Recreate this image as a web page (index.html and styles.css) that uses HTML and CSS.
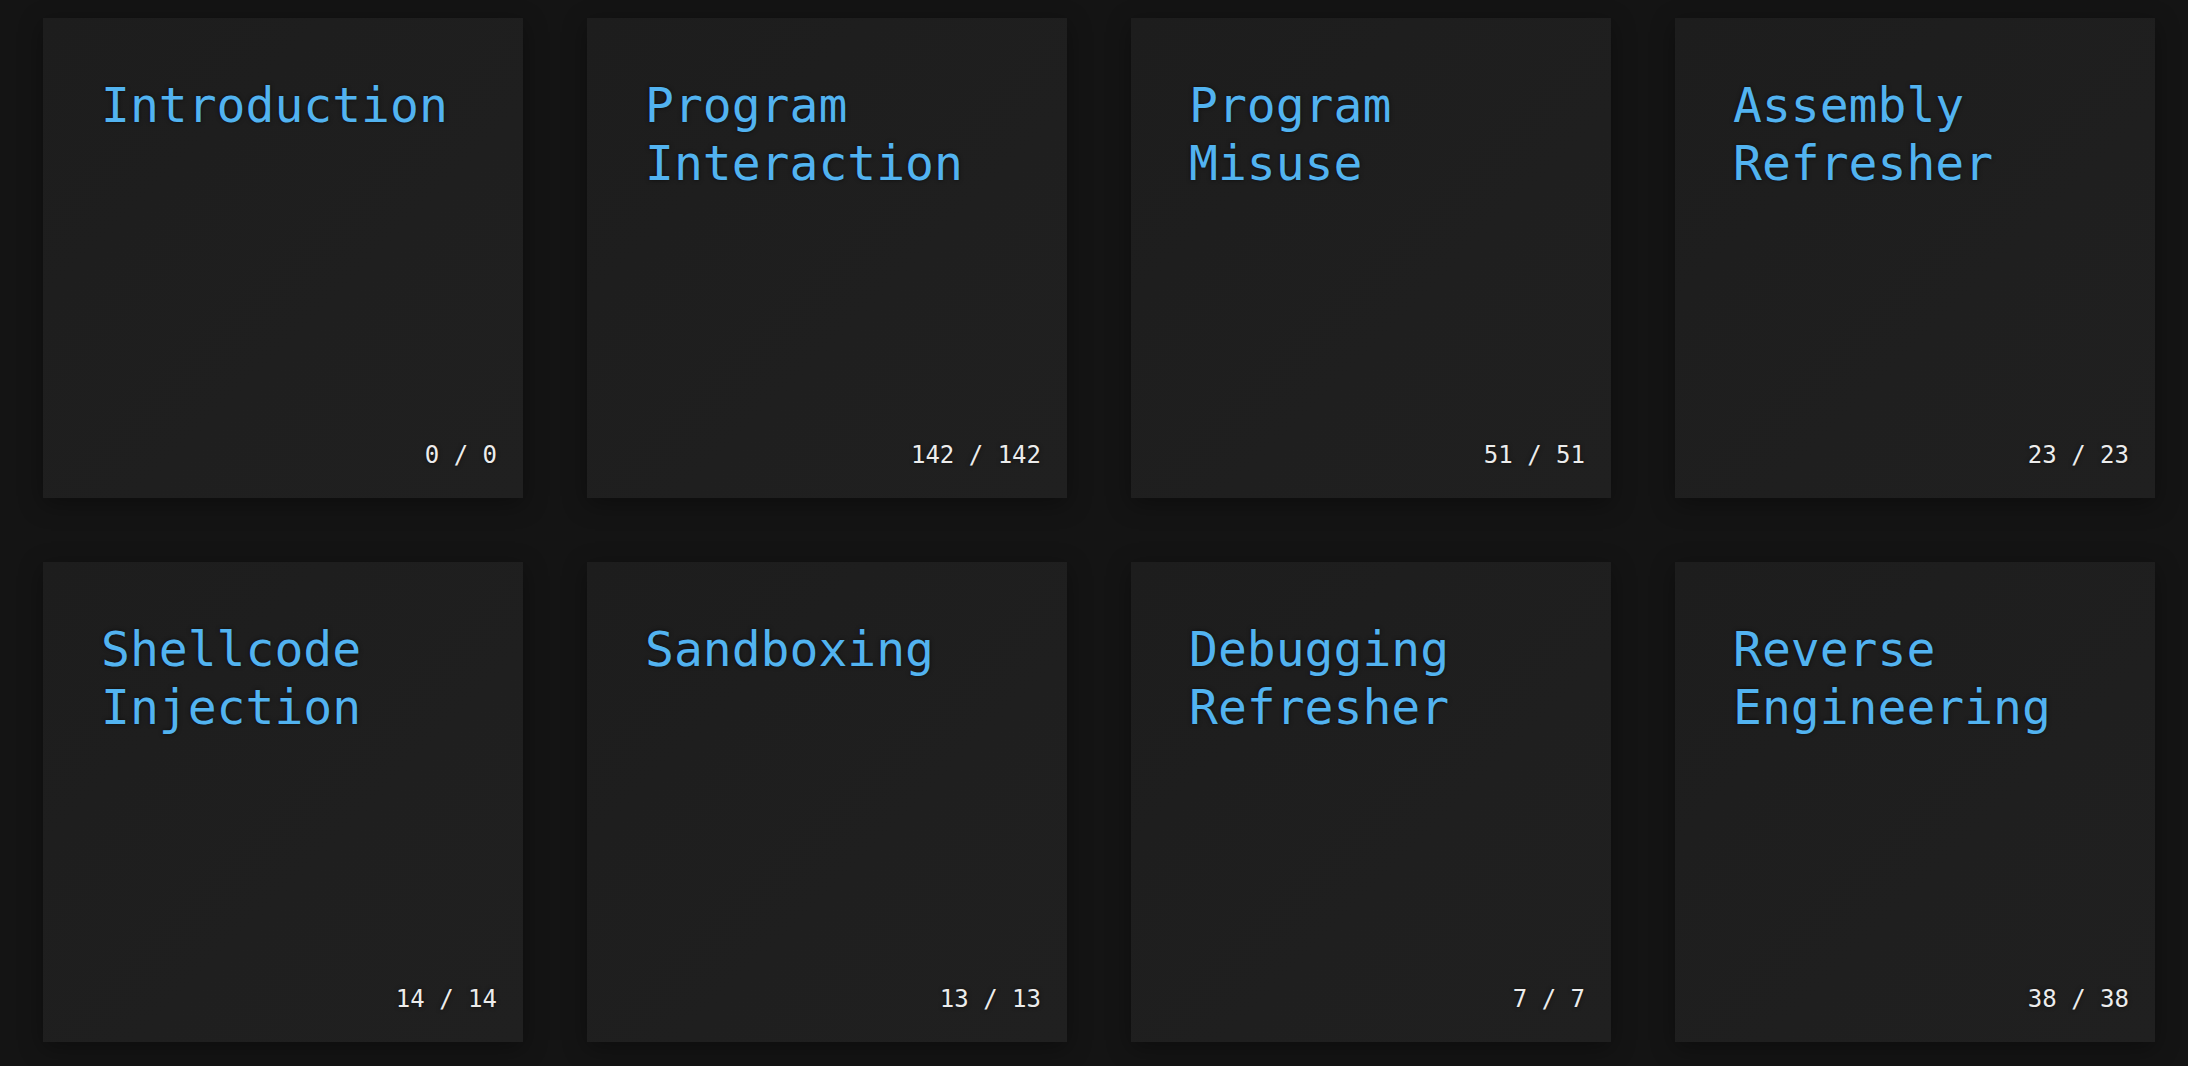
FILE: index.html
```html
<!DOCTYPE html>
<html lang="en">
<head>
<meta charset="utf-8">
<title>Modules</title>
<link rel="stylesheet" href="styles.css">
</head>
<body>
<main class="grid">
  <a class="card"><h2 class="card-title">Introduction</h2><span class="card-count">0 / 0</span></a>
  <a class="card"><h2 class="card-title">Program Interaction</h2><span class="card-count">142 / 142</span></a>
  <a class="card"><h2 class="card-title">Program Misuse</h2><span class="card-count">51 / 51</span></a>
  <a class="card"><h2 class="card-title">Assembly Refresher</h2><span class="card-count">23 / 23</span></a>
  <a class="card"><h2 class="card-title">Shellcode Injection</h2><span class="card-count">14 / 14</span></a>
  <a class="card"><h2 class="card-title">Sandboxing</h2><span class="card-count">13 / 13</span></a>
  <a class="card"><h2 class="card-title">Debugging Refresher</h2><span class="card-count">7 / 7</span></a>
  <a class="card"><h2 class="card-title">Reverse Engineering</h2><span class="card-count">38 / 38</span></a>
</main>
</body>
</html>
```

FILE: styles.css
```css
html, body {
  margin: 0;
  padding: 0;
  background: #141414;
  height: 100%;
  overflow: hidden;
}

body {
  font-family: "DejaVu Sans Mono", "Liberation Mono", monospace;
}

.grid {
  display: grid;
  grid-template-columns: repeat(4, 480px);
  grid-auto-rows: 480px;
  gap: 64px;
  padding: 18px 0 0 43px;
}

.card {
  display: flex;
  flex-direction: column;
  box-sizing: border-box;
  padding: 24px;
  background: linear-gradient(135deg, #1d1d1d 0%, #1f1f1f 60%, #202020 100%);
  box-shadow: 0 6px 22px rgba(0, 0, 0, 0.35);
  text-decoration: none;
}

.card-title {
  margin: 35px 0 0 34px;
  font-size: 48px;
  font-weight: normal;
  line-height: 1.2;
  color: #52b3f0;
  text-shadow: 0 0 4px rgba(0, 0, 0, 0.6);
  max-width: 360px;
}

.card-count {
  margin-top: auto;
  align-self: flex-end;
  margin-right: 2px;
  margin-bottom: 1px;
  font-size: 24px;
  line-height: 1.5;
  color: #ececec;
  text-shadow: 0 0 4px rgba(0, 0, 0, 0.6);
}
```
